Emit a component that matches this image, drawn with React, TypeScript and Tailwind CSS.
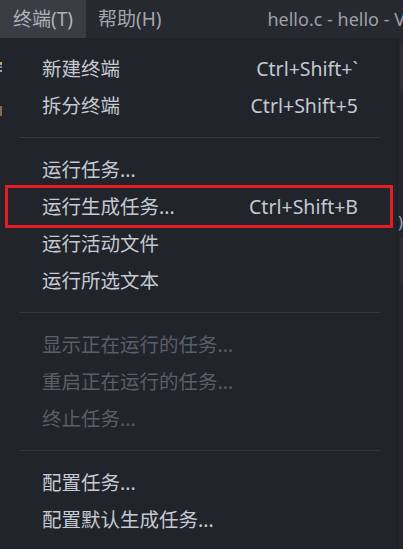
import React from "react";

type Item =
  | { kind: "item"; label: string; keys?: string; disabled?: boolean; marked?: boolean }
  | { kind: "sep" };

const items: Item[] = [
  { kind: "item", label: "新建终端", keys: "Ctrl+Shift+`" },
  { kind: "item", label: "拆分终端", keys: "Ctrl+Shift+5" },
  { kind: "sep" },
  { kind: "item", label: "运行任务..." },
  { kind: "item", label: "运行生成任务...", keys: "Ctrl+Shift+B", marked: true },
  { kind: "item", label: "运行活动文件" },
  { kind: "item", label: "运行所选文本" },
  { kind: "sep" },
  { kind: "item", label: "显示正在运行的任务...", disabled: true },
  { kind: "item", label: "重启正在运行的任务...", disabled: true },
  { kind: "item", label: "终止任务...", disabled: true },
  { kind: "sep" },
  { kind: "item", label: "配置任务..." },
  { kind: "item", label: "配置默认生成任务..." },
];

function MenuRow({ item }: { item: Item }) {
  if (item.kind === "sep") {
    return (
      <div className="flex h-[27px] items-center pl-[17px] pr-[17px]">
        <div className="h-px w-full bg-[#33363d]" />
      </div>
    );
  }
  return (
    <div
      className={`relative flex h-[37px] items-center justify-between pl-[40px] pr-[39px] ${
        item.disabled ? "text-[#595e67]" : "text-[#c4c9d2]"
      }`}
    >
      <span className="pt-px">{item.label}</span>
      {item.keys && <span className="pt-px">{item.keys}</span>}
      {/* 标注用的红框 */}
      {item.marked && (
        <span className="pointer-events-none absolute -bottom-[3px] -top-[3px] left-[3px] right-[4px] border-[3px] border-[#e51c24]" />
      )}
    </div>
  );
}

export default function App() {
  return (
    <div
      className="flex h-[549px] w-[403px] flex-col overflow-hidden bg-[#21242b]"
      style={{ fontFamily: '"Noto Sans", "Noto Sans CJK SC", sans-serif' }}
    >
      {/* 标题栏 / 菜单栏 */}
      <div className="flex h-[38px] shrink-0 items-stretch overflow-hidden whitespace-nowrap bg-[#262930] text-[19px] text-[#a2a7af]">
        <div className="flex items-center bg-[#3a3d44] px-[13px] text-[#aeb3bb]">终端(T)</div>
        <div className="flex items-center px-[12px]">帮助(H)</div>
        <div className="ml-[94px] flex items-center text-[18px] text-[#9ca1a9]">hello.c - hello - V</div>
      </div>

      <div className="flex flex-1">
        {/* 编辑器左侧残影 */}
        <div className="relative w-[2px] bg-[#21242b]">
          <span className="absolute left-0 top-[24px] h-[3px] w-[2px] bg-[#c9a45a]" />
          <span className="absolute left-0 top-[28px] h-[2px] w-[2px] bg-[#4a8fd8]" />
          <span className="absolute left-0 top-[32px] h-[2px] w-[2px] bg-[#9aa3b5]" />
          <span className="absolute left-0 top-[68px] h-[10px] w-[2px] bg-[#8a6d4a]" />
        </div>

        {/* 下拉菜单 */}
        <div className="flex-1 bg-[#21242b] pt-[12px] text-[19.5px] leading-none">
          {items.map((item, i) => (
            <MenuRow key={i} item={item} />
          ))}
        </div>

        {/* 右侧编辑器 */}
        <div className="relative w-[6px] border-l border-[#1c1e24] bg-[#23262d]">
          <span className="absolute left-[2px] top-[5px] h-[48px] w-[3px] bg-[#2c2f36]" />
          <span className="absolute left-0 top-[175px] text-[17px] leading-none text-[#8fa3c4]">)</span>
          <span className="absolute left-[2px] top-[200px] h-[45px] w-[3px] bg-[#2a2d33]" />
        </div>
      </div>
    </div>
  );
}
